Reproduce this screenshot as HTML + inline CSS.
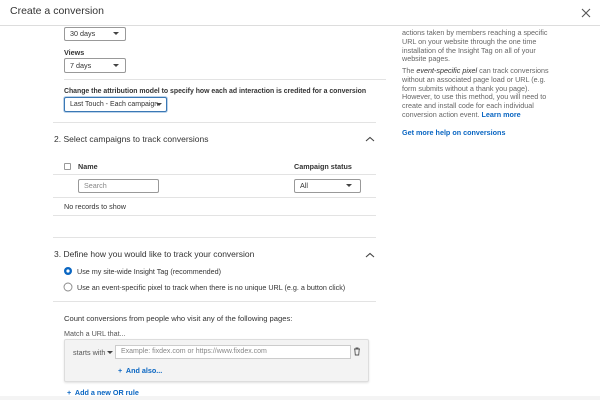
<!DOCTYPE html>
<html><head><style>
*{margin:0;padding:0;box-sizing:border-box}
body{width:600px;height:400px;overflow:hidden;background:#fff;font-family:"Liberation Sans",sans-serif;color:#333;position:relative}
.a{position:absolute;white-space:nowrap}
.t{font-size:7.2px;color:#333}
.b{font-weight:bold}
.h{font-size:8.5px;color:#333}
.ln{position:absolute;height:1px;background:#e3e3e3}
.dd{position:absolute;border:1px solid #999;border-radius:2px;background:#fff;font-size:7.2px;padding-left:5px;color:#333}
.car{position:absolute;width:0;height:0;border-left:3px solid transparent;border-right:3px solid transparent;border-top:3px solid #444}
.r{font-size:7.2px;color:#666;line-height:8.8px;position:absolute;left:402px;width:320px}
.lk{color:#0a66c2;font-weight:bold}
</style></head><body>
<div class="a" style="left:10px;top:5px;font-size:10.5px;color:#333">Create a conversion</div>
<svg class="a" style="left:581px;top:8px" width="10" height="10"><path d="M1 1L9 9M9 1L1 9" stroke="#555" stroke-width="1.1"/></svg>
<div class="ln" style="left:0;top:25px;width:600px;background:#ddd"></div>

<div class="dd" style="left:64px;top:27px;width:62px;height:14px;line-height:12px">30 days</div><div class="car" style="left:113px;top:32px"></div>
<div class="a t b" style="left:64px;top:48px">Views</div>
<div class="dd" style="left:64px;top:58px;width:62px;height:15px;line-height:13px">7 days</div><div class="car" style="left:113px;top:64px"></div>
<div class="ln" style="left:64px;top:79px;width:322px"></div>
<div class="a t b" style="left:64px;top:88px;font-size:6.9px">Change the attribution model to specify how each ad interaction is credited for a conversion</div>
<div class="dd" style="left:64px;top:97px;width:103px;height:15px;line-height:13px;border-color:#3a78b5;box-shadow:0 0 0 1px #bcd3ea;font-size:7px">Last Touch - Each campaign</div><div class="car" style="left:156px;top:103px"></div>
<div class="ln" style="left:53px;top:122px;width:323px"></div>

<div class="a h" style="left:54px;top:134px">2. Select campaigns to track conversions</div>
<svg class="a" style="left:365px;top:136px" width="10" height="6"><path d="M1 5L5 1.5L9 5" stroke="#444" fill="none" stroke-width="1.1"/></svg>
<div class="a" style="left:64px;top:163px;width:7px;height:7px;border:1px solid #999;border-radius:1px"></div>
<div class="a t b" style="left:78px;top:162px">Name</div>
<div class="a t b" style="left:294px;top:162px">Campaign status</div>
<div class="ln" style="left:53px;top:174px;width:323px"></div>
<div class="dd" style="left:78px;top:179px;width:81px;height:14px;line-height:12px;color:#888">Search</div>
<div class="dd" style="left:294px;top:179px;width:67px;height:14px;line-height:12px">All</div><div class="car" style="left:346px;top:184px"></div>
<div class="ln" style="left:53px;top:197px;width:323px"></div>
<div class="a t" style="left:64px;top:202px">No records to show</div>
<div class="ln" style="left:53px;top:215px;width:323px"></div>
<div class="ln" style="left:53px;top:237px;width:323px"></div>

<div class="a h" style="left:54px;top:249px">3. Define how you would like to track your conversion</div>
<svg class="a" style="left:365px;top:252px" width="10" height="6"><path d="M1 5L5 1.5L9 5" stroke="#444" fill="none" stroke-width="1.1"/></svg>
<svg class="a" style="left:63px;top:266px" width="10" height="10"><circle cx="5" cy="5" r="4" fill="#0a66c2"/><circle cx="5" cy="5" r="1.6" fill="#fff"/></svg>
<div class="a t" style="left:77px;top:267px">Use my site-wide Insight Tag (recommended)</div>
<svg class="a" style="left:63px;top:282px" width="10" height="10"><circle cx="5" cy="5" r="4" fill="#fff" stroke="#888" stroke-width="0.9"/></svg>
<div class="a t" style="left:77px;top:283px">Use an event-specific pixel to track when there is no unique URL (e.g. a button click)</div>
<div class="ln" style="left:53px;top:301px;width:323px"></div>
<div class="a" style="left:64px;top:314px;font-size:7.6px;color:#333">Count conversions from people who visit any of the following pages:</div>
<div class="a t" style="left:64px;top:329px;color:#555">Match a URL that...</div>
<div class="a" style="left:64px;top:339px;width:305px;height:43px;background:#f3f3f3;border:1px solid #ddd;border-radius:2px;box-shadow:0 1px 2px rgba(0,0,0,.12)"></div>
<div class="a t" style="left:73px;top:348px;color:#555">starts with</div><div class="car" style="left:107px;top:351px"></div>
<div class="a" style="left:115px;top:345px;width:236px;height:14px;background:#fff;border:1px solid #ccc;font-size:7px;color:#888;padding-left:5px;line-height:12px">Example: fixdex.com or https://www.fixdex.com</div>
<svg class="a" style="left:353px;top:347px" width="8" height="9"><path d="M1 2H7M3 2V1H5V2M1.8 2.5L2.3 8H5.7L6.2 2.5" stroke="#555" fill="none" stroke-width="0.9"/></svg>
<div class="a t lk" style="left:118px;top:366px">+&nbsp; And also...</div>
<div class="a t lk" style="left:67px;top:388px">+&nbsp; Add a new OR rule</div>
<div class="a" style="left:0;top:396px;width:600px;height:4px;background:#f4f4f4"></div>

<div class="r" style="top:29px">actions taken by members reaching a specific<br>URL on your website through the one time<br>installation of the Insight Tag on all of your<br>website pages.</div>
<div class="r" style="top:67px">The <i style="color:#333">event-specific pixel</i> can track conversions<br>without an associated page load or URL (e.g.<br>form submits without a thank you page).<br>However, to use this method, you will need to<br>create and install code for each individual<br>conversion action event. <span class="lk">Learn more</span></div>
<div class="r lk" style="top:129px">Get more help on conversions</div>
</body></html>
